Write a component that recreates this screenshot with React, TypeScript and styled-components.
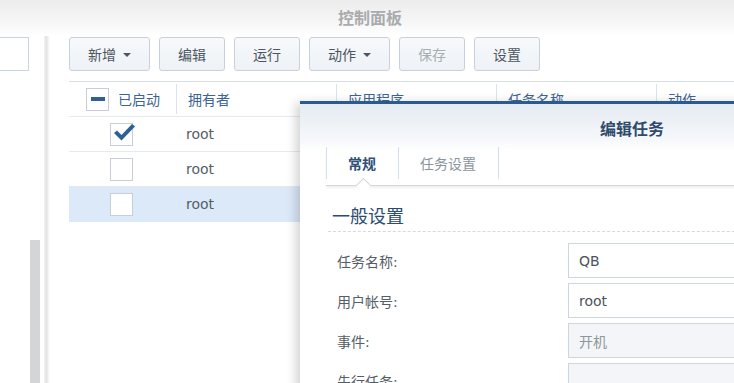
import styled, { createGlobalStyle } from "styled-components";

const GlobalStyle = createGlobalStyle`
    html, body {
        margin: 0;
        padding: 0;
        background: #fff;
    }
    body {
        font-family: "DejaVu Sans", "Noto Sans CJK SC", sans-serif;
        font-size: 14px;
        color: #505a64;
    }
`;

const Screen = styled.div`
    position: relative;
    width: 734px;
    height: 383px;
    overflow: hidden;
    background: #fff;
    display: flex;
    flex-direction: column;
`;

const TitleBar = styled.div`
    height: 36px;
    flex-shrink: 0;
    box-sizing: border-box;
    display: flex;
    align-items: center;
    justify-content: center;
    background: linear-gradient(#ececec, #f8f8f8 70%, #fff);
    color: #a9abad;
    font-size: 16px;
    font-weight: bold;
    padding: 0 0 3px 6px;
`;

const Body = styled.div`
    flex: 1;
    display: flex;
    min-height: 0;
`;

const Side = styled.div`
    width: 44px;
    flex-shrink: 0;
    display: flex;
    flex-direction: column;
    padding-top: 1px;
`;

const SideSearch = styled.div`
    width: 28px;
    height: 32px;
    border: 1px solid #c9d5e2;
    border-left: 0;
    background: #fff;
`;

const SideScroll = styled.div`
    margin: 169px 0 0 30px;
    width: 10px;
    flex: 1;
    background: #d4d5d7;
`;

const Divider = styled.div`
    width: 6px;
    flex-shrink: 0;
    background: linear-gradient(90deg, #f4f4f4, #e2e2e2 40%, #f2f2f2 70%, #fff);
`;

const Main = styled.div`
    flex: 1;
    padding: 1px 0 0 19px;
    display: flex;
    flex-direction: column;
`;

const Toolbar = styled.div`
    display: flex;
    gap: 9px;
`;

const ToolButton = styled.button<{ $disabled?: boolean }>`
    height: 34px;
    padding: 0 18px;
    display: flex;
    align-items: center;
    gap: 7px;
    border: 1px solid #c6d1dc;
    border-radius: 3px;
    background: linear-gradient(#f7f9fb, #eef2f6);
    font-family: inherit;
    font-size: 14px;
    color: ${(p) => (p.$disabled ? "#a7adb3" : "#4c5560")};
    white-space: nowrap;
`;

const Caret = styled.span`
    width: 0;
    height: 0;
    border-left: 4px solid transparent;
    border-right: 4px solid transparent;
    border-top: 4px solid #4c5560;
    margin-top: 1px;
`;

const Grid = styled.div`
    margin-top: 10px;
    border-top: 1px solid #d7dfe7;
    display: flex;
    flex-direction: column;
`;

const GridRow = styled.div<{ $selected?: boolean }>`
    display: grid;
    grid-template-columns: 107px 160px 160px 160px 160px;
    height: 34px;
    border-bottom: 1px solid ${(p) => (p.$selected ? "#dce9f9" : "#e6eaee")};
    background: ${(p) => (p.$selected ? "#dce9f9" : "transparent")};
    align-items: center;
`;

const HeadCell = styled.div<{ $first?: boolean }>`
    display: flex;
    align-items: center;
    gap: 9px;
    padding-left: ${(p) => (p.$first ? "17px" : "11px")};
    border-left: ${(p) => (p.$first ? "0" : "1px solid #dbe3ec")};
    color: #3e6592;
    box-sizing: border-box;
    white-space: nowrap;
    height: 30px;
`;

const Cell = styled.div<{ $center?: boolean }>`
    display: flex;
    align-items: center;
    padding-left: ${(p) => (p.$center ? "41px" : "10px")};
    color: #555d66;
    font-size: 14px;
`;

const Check = styled.span`
    width: 21px;
    height: 21px;
    border: 1px solid #c7ced6;
    background: #fff;
    display: flex;
    align-items: center;
    justify-content: center;
    position: relative;
`;

const Minus = styled.span`
    width: 14px;
    height: 4px;
    background: #2f5f97;
`;

const Dialog = styled.div`
    position: absolute;
    left: 300px;
    top: 101px;
    width: 664px;
    height: 300px;
    background: #fff;
    border-top: 3px solid #2c5a8e;
    box-shadow: -4px 2px 10px rgba(0, 0, 0, 0.18);
    display: flex;
    flex-direction: column;
`;

const DialogHead = styled.div`
    height: 46px;
    flex-shrink: 0;
    display: flex;
    align-items: center;
    justify-content: center;
    padding-top: 2px;
    box-sizing: border-box;
    background: linear-gradient(#e5ebf2, #f6f8fb 80%, #fff);
    color: #2f4b6b;
    font-size: 16px;
    font-weight: bold;
`;

const Tabs = styled.div`
    margin: -3px 0 0 26px;
    height: 38px;
    display: flex;
    align-items: flex-start;
    border-bottom: 1px solid #d3d7dc;
    box-shadow: 0 2px 2px rgba(0, 0, 0, 0.06);
`;

const Tab = styled.div<{ $active?: boolean }>`
    position: relative;
    height: 32px;
    display: flex;
    align-items: center;
    padding: 0 22px 0 21px;
    border-left: 1px solid #d6e0ea;
    font-weight: ${(p) => (p.$active ? "bold" : "normal")};
    color: ${(p) => (p.$active ? "#2f5079" : "#8b949c")};
    &:last-child {
        border-right: 1px solid #d6e0ea;
    }
    ${(p) =>
        p.$active &&
        `
        &::after {
            content: "";
            position: absolute;
            left: 31px;
            bottom: -12px;
            width: 10px;
            height: 10px;
            background: #fff;
            border-left: 1px solid #d3d7dc;
            border-top: 1px solid #d3d7dc;
            transform: rotate(45deg);
        }
    `}
`;

const Section = styled.div`
    margin: 16px 0 0 28px;
    padding: 0 0 3px 4px;
    border-bottom: 1px dashed #d6dadf;
    color: #2b4c72;
    font-size: 18px;
`;

const Form = styled.div`
    margin: 11px 0 0 37px;
    display: flex;
    flex-direction: column;
    gap: 5px;
`;

const FormRow = styled.div`
    display: flex;
    align-items: center;
    height: 35px;
`;

const Label = styled.div`
    width: 231px;
    color: #555d66;
    font-size: 14px;
`;

const Field = styled.div<{ $disabled?: boolean }>`
    flex: 1;
    height: 33px;
    display: flex;
    align-items: center;
    padding-left: 10px;
    border: 1px solid #cbd6e2;
    background: ${(p) => (p.$disabled ? "#f3f5f8" : "#fff")};
    color: ${(p) => (p.$disabled ? "#8f969d" : "#4b535b")};
    font-size: 14px;
`;

const CheckMark = () => (
    <svg width="24" height="20" viewBox="0 0 24 20" style={{ position: "absolute", left: 1, top: -2 }}>
        <path d="M2 11 L5 8.5 L9.5 13 L20 2 L23 4.5 L9.5 18.5 Z" fill="#2f5f97" />
    </svg>
);

const rows = [
    { checked: true, owner: "root" },
    { checked: false, owner: "root" },
    { checked: false, owner: "root", selected: true },
];

const fields = [
    { label: "任务名称:", value: "QB" },
    { label: "用户帐号:", value: "root" },
    { label: "事件:", value: "开机", disabled: true },
    { label: "先行任务:", value: "", disabled: true },
];

export default function App() {
    return (
        <>
            <GlobalStyle />
            <Screen>
                <TitleBar>控制面板</TitleBar>
                <Body>
                    <Side>
                        <SideSearch />
                        <SideScroll />
                    </Side>
                    <Divider />
                    <Main>
                        <Toolbar>
                            <ToolButton>
                                新增 <Caret />
                            </ToolButton>
                            <ToolButton>编辑</ToolButton>
                            <ToolButton>运行</ToolButton>
                            <ToolButton>
                                动作 <Caret />
                            </ToolButton>
                            <ToolButton $disabled>保存</ToolButton>
                            <ToolButton>设置</ToolButton>
                        </Toolbar>
                        <Grid>
                            <GridRow>
                                <HeadCell $first>
                                    <Check>
                                        <Minus />
                                    </Check>
                                    已启动
                                </HeadCell>
                                <HeadCell>拥有者</HeadCell>
                                <HeadCell>应用程序</HeadCell>
                                <HeadCell>任务名称</HeadCell>
                                <HeadCell>动作</HeadCell>
                            </GridRow>
                            {rows.map((row, i) => (
                                <GridRow key={i} $selected={row.selected}>
                                    <Cell $center>
                                        <Check>{row.checked ? <CheckMark /> : null}</Check>
                                    </Cell>
                                    <Cell>{row.owner}</Cell>
                                    <Cell />
                                    <Cell />
                                    <Cell />
                                </GridRow>
                            ))}
                        </Grid>
                    </Main>
                </Body>
                <Dialog>
                    <DialogHead>编辑任务</DialogHead>
                    <Tabs>
                        <Tab $active>常规</Tab>
                        <Tab>任务设置</Tab>
                    </Tabs>
                    <Section>一般设置</Section>
                    <Form>
                        {fields.map((f) => (
                            <FormRow key={f.label}>
                                <Label>{f.label}</Label>
                                <Field $disabled={f.disabled}>{f.value}</Field>
                            </FormRow>
                        ))}
                    </Form>
                </Dialog>
            </Screen>
        </>
    );
}
